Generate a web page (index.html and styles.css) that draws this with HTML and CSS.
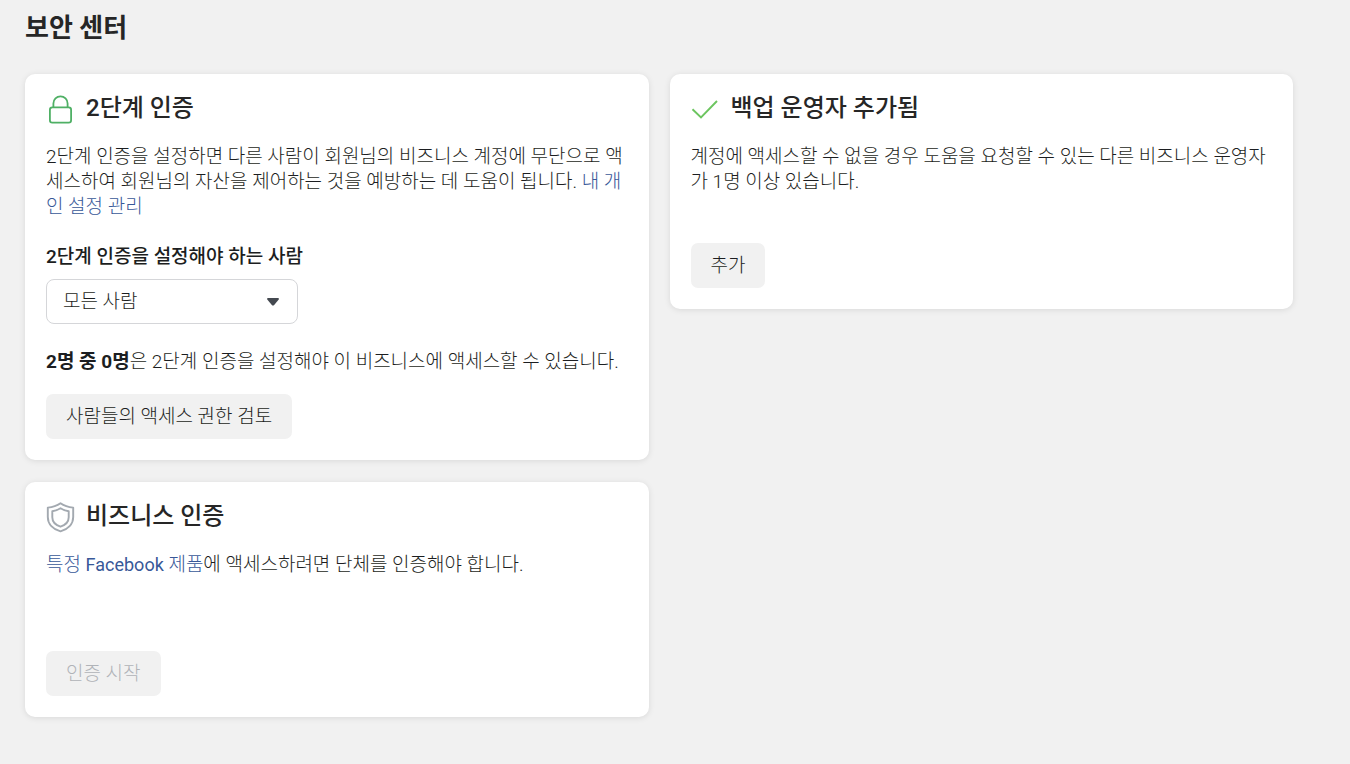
FILE: index.html
```
<!DOCTYPE html>
<html lang="ko">
<head>
	<meta charset="utf-8">
	<meta name="viewport" content="width=device-width, initial-scale=1">
	<title>보안 센터</title>
	<link rel="stylesheet" href="styles.css">
</head>
<body>
	<main class="page">
		<h1 class="page-title">보안 센터</h1>
		<div class="columns">
			<div class="column">
				<section class="card">
					<div class="card-head">
						<svg class="icon" width="30" height="32" viewBox="0 0 30 32" fill="none" stroke="#4fb065" stroke-width="1.8">
							<rect x="3.9" y="14.4" width="21.2" height="15.2" rx="2.4"/>
							<path d="M7.4 14.2V10.4a7.1 7.1 0 0 1 14.2 0v3.8"/>
						</svg>
						<h2 class="card-title">2단계 인증</h2>
					</div>
					<p class="text">2단계 인증을 설정하면 다른 사람이 회원님의 비즈니스 계정에 무단으로 액세스하여 회원님의 자산을 제어하는 것을 예방하는 데 도움이 됩니다. <a href="#">내 개인 설정 관리</a></p>
					<label class="label" for="who">2단계 인증을 설정해야 하는 사람</label>
					<div class="select-box">
						<select class="select" id="who">
							<option>모든 사람</option>
						</select>
						<svg class="caret" width="14" height="10" viewBox="0 0 14 10">
							<path d="M2 1h10q1.600 .3 .7 1.600L8.200 8Q7 9.200 5.800 8L1.300 2.600Q.4 1.300 2 1z" fill="#444950"/>
						</svg>
					</div>
					<p class="text status"><strong>2명 중 0명</strong>은 2단계 인증을 설정해야 이 비즈니스에 액세스할 수 있습니다.</p>
					<button class="button" type="button">사람들의 액세스 권한 검토</button>
				</section>
				<section class="card card-short">
					<div class="card-head">
						<svg class="icon" width="30" height="32" viewBox="0 0 30 32" fill="none" stroke="#a3a9b0" stroke-width="1.9" stroke-linejoin="round">
							<path d="M14.500 2.300C11 4.800 7 6.200 1.800 6.600v9.400c0 7.200 5.300 12.300 12.700 14.400 7.400-2.100 12.700-7.200 12.700-14.400V6.600C22 6.200 18 4.800 14.500 2.300z"/>
							<path d="M14.500 7.300c-2.500 1.600-5.200 2.600-8.200 3v6c0 4.600 3.300 7.800 8.200 9.400 4.900-1.600 8.200-4.800 8.200-9.400v-6c-3-.4-5.700-1.400-8.200-3z"/>
						</svg>
						<h2 class="card-title">비즈니스 인증</h2>
					</div>
					<p class="text"><a href="#">특정 <span class="latin" lang="en">Facebook</span> 제품</a>에 액세스하려면 단체를 인증해야 합니다.</p>
					<button class="button" type="button" disabled>인증 시작</button>
				</section>
			</div>
			<div class="column">
				<section class="card card-short">
					<div class="card-head">
						<svg class="icon" width="30" height="32" viewBox="0 0 30 32" fill="none" stroke="#6cc55f" stroke-width="1.9">
							<path d="M1.500 16.200l8.500 8.300L26 8"/>
						</svg>
						<h2 class="card-title">백업 운영자 추가됨</h2>
					</div>
					<p class="text">계정에 액세스할 수 없을 경우 도움을 요청할 수 있는 다른 비즈니스 운영자가 1명 이상 있습니다.</p>
					<button class="button" type="button">추가</button>
				</section>
			</div>
		</div>
	</main>
</body>
</html>
```
FILE: styles.css
```
*{
	box-sizing: border-box;
	margin: 0;
	padding: 0;
}
body{
	background: #f1f1f1;
	color: #1c1e21;
	font-family: Roboto, "Noto Sans CJK KR", sans-serif;
	font-size: 19px;
	font-weight: 300;
	line-height: 25px;
}
a{
	color: #385898;
	text-decoration: none;
}
a:hover{
	text-decoration: underline;
}
.latin{
	font-size: 18px;
	font-weight: 400;
}
.page{
	padding: 10px 57px 40px 25px;
}
.page-title{
	margin-bottom: 28px;
	color: #262626;
	font-size: 26px;
	font-weight: 700;
	line-height: 36px;
}
.columns{
	display: grid;
	grid-template-columns: 1fr 1fr;
	align-items: start;
	gap: 21px;
}
.column{
	display: flex;
	flex-direction: column;
	gap: 22px;
}
.card{
	display: flex;
	flex-direction: column;
	align-items: flex-start;
	padding: 17px 20px 21px 21px;
	border-radius: 10px;
	background: #fff;
	box-shadow: 0 1px 6px rgba(0,0,0, .1);
}
.card-short{
	min-height: 235px;
}
.card-short .button{
	margin-top: auto;
}
.card-head{
	display: flex;
	align-items: center;
	gap: 10px;
	margin-bottom: 19px;
}
.icon{
	flex: none;
	margin-top: 2px;
}
.card-title{
	color: #262626;
	font-size: 24px;
	font-weight: 500;
	line-height: 32px;
}
.text{
	word-break: break-all;
}
.label{
	margin: 25px 0 10px;
	font-weight: 500;
}
.select-box{
	position: relative;
	width: 252px;
}
.select{
	width: 100%;
	height: 45px;
	padding: 0 40px 0 16px;
	border: 1px solid #d5d6d9;
	border-radius: 8px;
	background: #fff;
	color: inherit;
	font: inherit;
	appearance: none;
	cursor: pointer;
}
.caret{
	position: absolute;
	top: 18px;
	right: 18px;
	pointer-events: none;
}
.status{
	margin: 25px 0 20px;
}
.status strong{
	font-weight: 700;
}
.button{
	height: 45px;
	padding: 0 20px;
	border: 0;
	border-radius: 7px;
	background: #f1f1f1;
	color: inherit;
	font: inherit;
	cursor: pointer;
}
.button:disabled{
	color: #b0b3b8;
	cursor: default;
}
```
